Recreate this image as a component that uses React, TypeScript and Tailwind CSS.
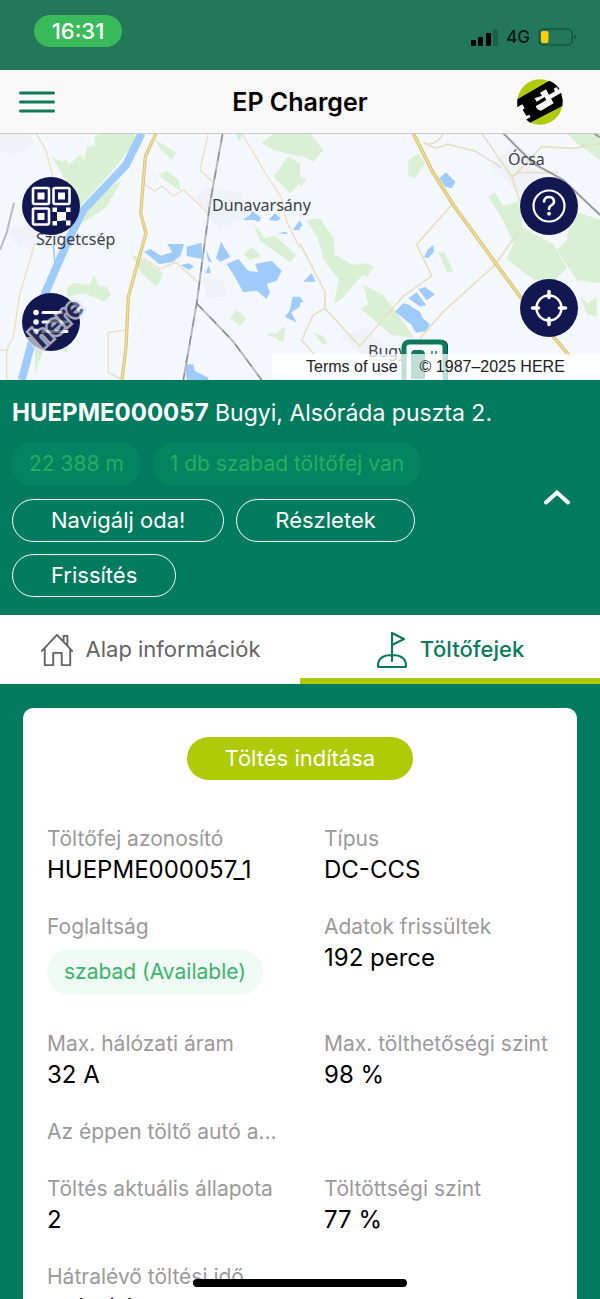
import { useState } from "react"
import type { ReactNode } from "react"

interface ConnectorField {
  label: string
  value?: string
  badge?: boolean
}

const fields: ConnectorField[] = [
  { label: "Töltőfej azonosító", value: "HUEPME000057_1" },
  { label: "Típus", value: "DC-CCS" },
  { label: "Foglaltság", value: "szabad (Available)", badge: true },
  { label: "Adatok frissültek", value: "192 perce" },
  { label: "Max. hálózati áram", value: "32 A" },
  { label: "Max. tölthetőségi szint", value: "98 %" },
  { label: "Az éppen töltő autó a..." },
  { label: "" },
  { label: "Töltés aktuális állapota", value: "2" },
  { label: "Töltöttségi szint", value: "77 %" },
  { label: "Hátralévő töltési idő", value: "számítás" },
]

function StatusBar() {
  return (
    <div className="flex h-[70px] shrink-0 items-start justify-between bg-[#23785b] pl-[34px] pr-6 pt-[15px]">
      <div className="flex h-8 w-[88px] items-center justify-center rounded-full bg-[#3abb5b] text-[22px] font-medium text-white">
        16:31
      </div>
      <div className="mt-3 flex items-center gap-2">
        <svg className="h-[17px] w-7" viewBox="0 0 28 17">
          <rect x="1" y="11" width="5" height="6" rx="1" fill="#000" />
          <rect x="8" y="8" width="5" height="9" rx="1" fill="#000" />
          <rect x="16" y="4" width="5" height="13" rx="1" fill="#000" />
          <rect x="23" y="1" width="5" height="16" rx="1" fill="#1b5f48" />
        </svg>
        <span className="text-[17px] font-medium leading-5 text-[#0b1612]">4G</span>
        <svg className="h-[18px] w-[38px]" viewBox="0 0 38 18">
          <rect x="1" y="1" width="33" height="16" rx="4.5" fill="none" stroke="#17573f" strokeWidth="1.5" />
          <rect x="3" y="3" width="7.500" height="12" rx="2" fill="#fccd0b" />
          <path d="M36 6.500q2 .6 2 2.500t-2 2.500z" fill="#17573f" />
        </svg>
      </div>
    </div>
  )
}

function Logo() {
  return (
    <svg className="size-[46px]" viewBox="650 236 138 138">
      <circle cx="719" cy="305" r="68" fill="#afca0b" />
      <path d="M651 297 747 241Q772 251 782 274L787 300 786 317 689 367 674 354 651 322Z" fill="#000" />
      <path d="M648 322 666 312 673 324 667 328 678 347 687 343 691 350 674 360 655 345Z" fill="#f8f8f8" />
      <path d="M719 277 737 267 746 283 764 273 760 265 769 260 774 268 784 262 790 273 752 295 760 309 722 331 711 327 706 318 738 299 733 290 709 304 703 294 725 286Z" fill="#f8f8f8" />
    </svg>
  )
}

function AppHeader() {
  return (
    <header className="grid h-16 shrink-0 grid-cols-3 items-center border-b border-[#c9cbcb] bg-[#f8f8f8] px-[19px]">
      <button aria-label="Menü" className="w-9">
        <svg className="h-6 w-9" viewBox="0 0 36 24" stroke="#14795a" strokeWidth="3" strokeLinecap="round">
          <path d="M1.500 3h33M1.500 12h33M1.500 21h33" />
        </svg>
      </button>
      <h1 className="whitespace-nowrap text-center text-[25px] font-semibold leading-8 text-black">EP Charger</h1>
      <div className="flex justify-end pr-[18px]">
        <Logo />
      </div>
    </header>
  )
}

function MapTiles() {
  return (
    <svg className="absolute inset-0 size-full" viewBox="0 0 600 246" preserveAspectRatio="xMidYMid slice">
      <rect width="600" height="246" fill="#f4f8fc" />
      {/* western half */}
      <g transform="translate(0 -4) scale(.33333)">
        <g fill="#eff2f7">
          <path d="M585 200l40-30 100 20 20 70-90 40zM610 440l60 10 10 50-60 5zM0 10h90l10 30-60 40L0 60zM20 300l80-20 20 60-60 20z" />
        </g>
        <g fill="#daf0d5">
          <path d="M155 80l30 15 15-5 5 15 35-30 12 12 10-35 25-5-5-25 25-15h90l15 20-70 90-100 110z" />
          <path d="M365 150l-45 80-95 65 60-90z" />
          <path d="M465 28l65 40-15 20-35-30zM475 135l25-12 35 25 8 35-25-15zM395 375l30 10 65 45-20 40-45-40z" />
          <path d="M200 475l20-15 50 5 12-30 12 30 25 5 14 25-20 20-60-25-50 10zM105 660l30-10-30 80zM180 660l25-15-5 25z" />
          <path d="M760 280l20 25 15 20 30-8 63 58-18 22-90-65zM730 372l25-22 28 28-35 12zM690 565l20-25 30 25-20 22zM795 612l35-2 25-22-5 50-25-15z" />
          <path d="M820 10h80v70l-80-20-35-20zM865 80l35 20v60l-30 30-50-50zM705 10h25l-10 25z" />
        </g>
        <path d="M425 10L378 105 250 240 205 330 135 490 65 750" fill="none" stroke="#9ecbf9" strokeWidth="24" />
        <path d="M160 345l7 80" fill="none" stroke="#9ecbf9" strokeWidth="5" />
        <g fill="#9ecbf9">
          <path d="M432 365l20-8 30 20 35-10-15-25h50l-10 35-25 20-40 5zM560 350l45-12 3 50-48-10zM542 405l25-5 15 10-15 10zM618 358l18 40-12-5zM648 385l15-50 28 45-30 15zM615 430l12-25 5 25z" />
          <path d="M680 402l35-15 30 35 30 5-10-25 50-10 30 30-15 30-30 10 10 25-10 20-30-25-40 5-25-45z" />
          <path d="M728 270l22-15 8-12 25 20-5 12-20-5zM805 270l20-20 17 15-10 8zM832 310l25-5 8 8zM878 300l22-30v30zM868 550l10-50h22v30zM855 560l15-20 20 38zM555 703h25l5 20 40 20v7h-65z" />
        </g>
        <g fill="none" stroke="#e9dfc2" strokeWidth="4">
          <path d="M108 10l30 50 20 80M105 340L60 490 40 620 20 660v90M0 660h25M435 165l30 18 20-15 35 30 30-18 75 70M625 10l-25 110 38 35M725 10l75 125 45 70 15 70 40 80M430 385l50 32 48-20 65 60M375 600l-50 8v120l40 20" />
        </g>
        <path d="M468 10L436 80 422 250 438 310 385 500 378 650 366 750" fill="none" stroke="#d9c477" strokeWidth="10" />
        <path d="M468 10L436 80 422 250 438 310 385 500 378 650 366 750" fill="none" stroke="#f1dfa0" strokeWidth="4" />
        <g fill="none" stroke="#b9babd" strokeWidth="6">
          <path d="M668 10L630 220 590 520 550 750M590 520l110 115 85 115M42 218l-22 90L0 360" />
        </g>
        <path d="M668 10L630 220 590 520 550 750M590 520l110 115 85 115" fill="none" stroke="#8d8e91" strokeWidth="4" strokeDasharray="28 28" />
      </g>
      {/* eastern half */}
      <g transform="translate(300 -4) scale(.33333)">
        <path d="M570 110l60-60 80 30 40 60-80 60zM120 620l80-30 50 60-60 30z" fill="#eff2f7" />
        <g fill="#daf0d5">
          <path d="M0 10h30l40 50-30 35-40-20zM0 140l20 10-20 20z" />
          <path d="M325 90l30-20 20 30-30 45-20-10zM20 270l40-5 40 60 5 50 55 30 40-5 22 10-20 30-15-5-65 75-20 10 15-70-45-60-20-70z" />
          <path d="M190 465l60 30 95 130-70-10-95-80 25-10zM565 200l20-12 25 40 45-15 15 80 90 50 40 70-40 45-60-10-80-60 20-50-30-65z" />
          <path d="M770 360l30-30 15-90 85 30v190l-70-10zM800 10h100v80l-70-50zM415 365l20 5 25 55-20 2zM840 500l25 20 25-20v60l-30-10zM40 605l30 15 15 25-20-5z" />
        </g>
        <g fill="#9ecbf9">
          <path d="M418 145l20-18 28 28-10 20-20-5zM372 382l10-22 18-15 2 20-18 20zM10 455l25-25 12 25zM0 272l8 15-8 5zM0 500l10 15-10 5z" />
          <path d="M285 545l25-25 20 5 40 60-25 20-10-20zM325 505l25-18 28 38-18 5zM355 478l20-7 30 22-25 18zM315 520l45 25 8 20 22 18-12 20-30 5z" />
        </g>
        <g fill="none" stroke="#e6dfc3" strokeWidth="5">
          <path d="M370 35l35 20 40-12 80 20 80 50M430 10q-20 40-60 30M545 10l90 130 25 75M635 140l20-12h120M635 145l90-95 100 5 75-15M452 228L350 343l45 95-85 60-130 150M655 305l-70 100-155 140-70 80M0 340l75 145v50l105 115M75 535l-35 20-35 75 40 45" />
        </g>
        <path d="M340 10L395 120 460 225 660 500 810 680" fill="none" stroke="#d9c477" strokeWidth="11" />
        <path d="M340 10L395 120 460 225 660 500 810 680" fill="none" stroke="#f1dfa0" strokeWidth="4" />
        <path d="M610 10l90 90 90 50 110 105M882 10l18 12" fill="none" stroke="#999b9e" strokeWidth="6" />
      </g>
    </svg>
  )
}

function RoundButton({ label, children }: { label: string; children: ReactNode }) {
  return (
    <button aria-label={label} className="flex size-[58px] items-center justify-center rounded-full bg-[#121752] text-white">
      {children}
    </button>
  )
}

function QrIcon() {
  return (
    <svg className="size-10" viewBox="0 0 40 40">
      <g fill="none" stroke="currentColor" strokeWidth="2.600">
        <rect x="2" y="2" width="16" height="16" rx="1.500" />
        <rect x="22.500" y="2" width="16" height="16" rx="1.500" />
        <rect x="2" y="22.500" width="16" height="16" rx="1.500" />
      </g>
      <path d="M6.500 6.500h7v7h-7zM27 6.500h7v7h-7zM6.500 27h7v7h-7z" fill="currentColor" />
      <path d="M21.500 21.500h4.500v4.500h-4.500zM35 21.500h4.500v4.500h-4.500zM26 26h9v4.500h-9zM26 30.500h4.500v4.500h-4.500zM21.500 35h4.500v4.500h-4.500zM30.500 30.500h4.500v4h-4.500zM35 34.500h4.500v5h-4.500z" fill="currentColor" />
    </svg>
  )
}

function MapView() {
  return (
    <section className="relative h-[246px] shrink-0 overflow-hidden font-['Noto_Sans',sans-serif]">
      <MapTiles />
      <span className="absolute left-[212px] top-[59px] text-base leading-6 text-[#3a3f47]">Dunavarsány</span>
      <span className="absolute left-[36px] top-[93px] text-base leading-6 text-[#3a3f47]">Szigetcsép</span>
      <span className="absolute left-[508px] top-[13px] text-base leading-6 text-[#3a3f47]">Ócsa</span>
      <span className="absolute left-[368px] top-[205px] text-base leading-6 text-[#3a3f47]">Bugyi</span>
      <svg className="absolute left-[401px] top-[205px] h-11 w-12" viewBox="0 0 48 44">
        <rect x="6" y="1" width="41" height="50" rx="6" fill="#121752" />
        <rect x="3" y="3" width="41" height="50" rx="5" fill="#fff" stroke="#0a7c5c" strokeWidth="5" />
        <path d="M10 16q0-5 4-5h6q4 0 4 5v24H10z" fill="#0a7c5c" />
        <path d="M31 12v3M35 12v3" fill="none" stroke="#0a7c5c" strokeWidth="1.500" />
      </svg>

      {/* Controls over the map */}
      <div className="absolute left-[22px] top-[43px] flex flex-col gap-[58px]">
        <RoundButton label="QR kód">
          <QrIcon />
        </RoundButton>
        <RoundButton label="Lista">
          <svg className="h-7 w-10" viewBox="0 0 40 28" stroke="currentColor" strokeWidth="3" strokeLinecap="round">
            <path d="M12 4.500h19M12 14h24M12 23.500h24" />
            <path d="M5 4.500h.1M5 14h.1M5 23.500h.1" strokeWidth="5.500" />
          </svg>
        </RoundButton>
      </div>
      <div className="absolute right-[22px] top-[43px] flex flex-col gap-11">
        <RoundButton label="Súgó">
          <svg className="size-9" viewBox="0 0 36 36" fill="none" stroke="currentColor" strokeWidth="2.200" strokeLinecap="round">
            <circle cx="18" cy="18" r="15.500" />
            <path d="M13 13.500q.6-4.500 5-4.500t5 4.200q0 2.800-2.700 4.200-2.300 1.200-2.300 3.600" strokeWidth="2.600" />
            <circle cx="18" cy="25.700" r="1.900" fill="currentColor" stroke="none" />
          </svg>
        </RoundButton>
        <RoundButton label="Saját pozíció">
          <svg className="size-10" viewBox="0 0 40 40" fill="none" stroke="currentColor" strokeLinecap="round">
            <circle cx="20" cy="20" r="12.500" strokeWidth="2.400" />
            <path d="M20 3.500v6M20 30.500v6M3.500 20h6M30.500 20h6" strokeWidth="3.600" />
          </svg>
        </RoundButton>
      </div>
      {/* Map provider watermark */}
      <svg className="absolute left-[12px] top-[150px] h-20 w-[88px]" viewBox="0 0 88 80" opacity=".7">
        <path d="M13 53h12l10 10-8 8z" fill="#dfe1ea" />
        <text x="30" y="65" transform="rotate(-42 30 65)" fontSize="29" fontWeight="900" fontFamily="Lato, sans-serif" fill="#2c3056" stroke="#dfe1ea" strokeWidth="5" paintOrder="stroke">
          here
        </text>
      </svg>

      <div className="absolute bottom-0 right-0 flex h-[26px] w-[328px] items-center gap-[22px] bg-white/75 pl-[34px] font-['Liberation_Sans',Arial,sans-serif] text-base text-[#222]">
        <a href="#terms" className="whitespace-nowrap">Terms of use</a>
        <span className="whitespace-nowrap">© 1987–2025 HERE</span>
      </div>
    </section>
  )
}

function OutlineButton({ children }: { children: ReactNode }) {
  return (
    <button className="h-[43px] rounded-full border border-white px-[38px] text-[22px] text-white">{children}</button>
  )
}

function StationPanel() {
  return (
    <section className="shrink-0 bg-[#007b5d] px-3 pb-[18px] pt-[17px] text-white">
      <h2 className="text-[23px] leading-8">
        <strong className="text-2xl font-bold">HUEPME000057</strong> Bugyi, Alsóráda puszta 2.
      </h2>
      <div className="mt-3 flex items-center">
        <div className="flex-1">
          <div className="flex gap-3 text-[21px] text-[#27ae60]">
            <span className="flex h-[46px] items-center rounded-full bg-[#048361] px-[17px]">22 388 m</span>
            <span className="flex h-[46px] items-center rounded-full bg-[#048361] px-[17px]">1 db szabad töltőfej van</span>
          </div>
          <div className="mt-3 flex max-w-[480px] flex-wrap gap-3">
            <OutlineButton>Navigálj oda!</OutlineButton>
            <OutlineButton>Részletek</OutlineButton>
            <OutlineButton>Frissítés</OutlineButton>
          </div>
        </div>
        <button aria-label="Bezárás" className="mb-[42px] mr-[17px]">
          <svg className="h-4 w-7" viewBox="0 0 28 16" fill="none" stroke="currentColor" strokeWidth="4" strokeLinecap="round">
            <path d="M3 12.500L14 2.500l11 10" />
          </svg>
        </button>
      </div>
    </section>
  )
}

function Tabs() {
  const [active, setActive] = useState("connectors")

  return (
    <div role="tablist" className="grid h-[69px] shrink-0 grid-cols-2 bg-white text-[22px]">
      <button
        role="tab"
        aria-selected={active === "info"}
        onClick={() => setActive("info")}
        className="flex items-center justify-center gap-3 border-b-6 border-transparent pt-1.5 text-[#646464] aria-selected:border-[#afca0b] aria-selected:font-medium aria-selected:text-[#0a7a5a]"
      >
        <svg className="size-[34px]" viewBox="0 0 36 36" fill="none" stroke="currentColor" strokeWidth="2" strokeLinecap="round" strokeLinejoin="round">
          <path d="M2 19L18 2l16 17M5 17v17h9V21h9v13h9V17M25 9V3h4v10" />
        </svg>
        Alap információk
      </button>
      <button
        role="tab"
        aria-selected={active === "connectors"}
        onClick={() => setActive("connectors")}
        className="flex items-center justify-center gap-3 border-b-6 border-transparent pt-1.5 text-[#646464] aria-selected:border-[#afca0b] aria-selected:font-medium aria-selected:text-[#0a7a5a]"
      >
        <svg className="h-9 w-8" viewBox="0 0 32 36" fill="none" stroke="currentColor" strokeWidth="2.200" strokeLinecap="round" strokeLinejoin="round">
          <path d="M16 29V1l12 6-12 6M2 34q0-11 14-11t14 11q0 1-1 1H3q-1 0-1-1z" />
        </svg>
        Töltőfejek
      </button>
    </div>
  )
}

function Field({ field }: { field: ConnectorField }) {
  return (
    <div className="min-w-0">
      <dt className="-mr-3 truncate text-[21px] leading-[31px] text-[#9a9a9a]">{field.label}</dt>
      {field.badge && (
        <dd className="my-[7px] flex h-[46px] w-fit items-center whitespace-nowrap rounded-full bg-[#effbf4] px-[17px] text-[21px] text-[#3bb36d]">
          {field.value}
        </dd>
      )}
      {field.value && !field.badge && <dd className="text-2xl leading-[31px] text-black">{field.value}</dd>}
    </div>
  )
}

function ConnectorCard() {
  return (
    <div className="rounded-t-[10px] bg-white px-6 pb-6 pt-[29px]">
      <div className="flex justify-center">
        <button className="h-[43px] rounded-full bg-[#afcb08] px-[38px] text-[22px] text-white">Töltés indítása</button>
      </div>
      <dl className="mt-[43px] grid grid-cols-2 gap-x-12 gap-y-[26px]">
        {fields.map((field, i) => (
          <Field key={i} field={field} />
        ))}
      </dl>
    </div>
  )
}

export default function App() {
  return (
    <div className="relative flex h-dvh flex-col overflow-hidden bg-[#007b5d] font-['Inter',sans-serif]">
      <StatusBar />
      <AppHeader />
      <MapView />
      <StationPanel />
      <Tabs />
      <main className="min-h-0 flex-1 overflow-y-auto px-[23px] pt-6 [scrollbar-width:none]">
        <ConnectorCard />
      </main>
      {/* Home indicator */}
      <div className="absolute bottom-3 left-1/2 h-2 w-[214px] -translate-x-1/2 rounded-full bg-black" />
    </div>
  )
}
